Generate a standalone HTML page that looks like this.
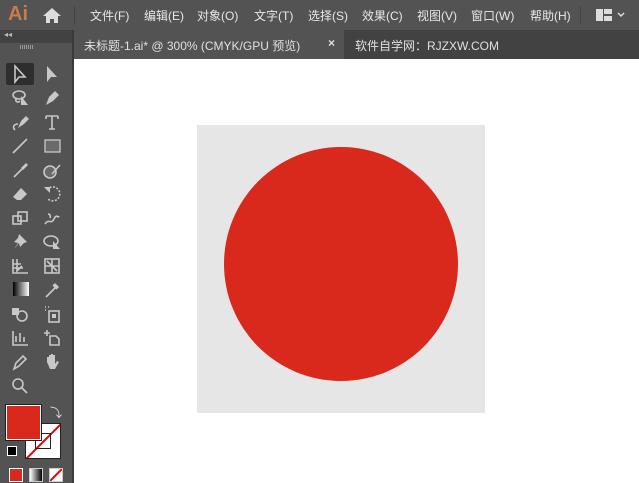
<!DOCTYPE html><html><head><style>
body{margin:0;width:639px;height:483px;overflow:hidden;background:#fff;font-family:"Liberation Sans","Noto Sans CJK SC",sans-serif;position:relative}
.menu{position:absolute;left:0;top:0;width:639px;height:30px;background:#535353;color:#e8e8e8;font-size:12px}
.menu span{position:absolute;top:7px}
.tabbar{position:absolute;left:74px;top:30px;width:565px;height:29px;background:#424242}
.tab{position:absolute;left:0;top:0;width:270px;height:29px;background:#535353;color:#e0e0e0;font-size:12px}
.left{position:absolute;left:0;top:30px;width:72px;height:453px;background:#535353}
.edge{position:absolute;left:72px;top:30px;width:2px;height:453px;background:#3a3a3a}
svg.i{position:absolute;width:20px;height:20px}
svg.i *{stroke:#c8c8c8;fill:none;stroke-width:1.6}
svg.i .f{fill:#c8c8c8;stroke:none}
</style></head><body>
<div class="menu">
<span style="left:8px;top:3px;font-size:20px;color:#c87c4a;font-weight:bold">Ai</span>
<svg style="position:absolute;left:42px;top:7px" width="20" height="16"><path d="M10 1L1 9h3v7h4v-4h4v4h4V9h3z" fill="#ddd"/></svg>
<div style="position:absolute;left:74px;top:6px;width:1px;height:18px;background:#444"></div>
<span style="left:90px">文件(F)</span><span style="left:144px">编辑(E)</span><span style="left:197px">对象(O)</span><span style="left:254px">文字(T)</span><span style="left:308px">选择(S)</span><span style="left:362px">效果(C)</span><span style="left:417px">视图(V)</span><span style="left:471px">窗口(W)</span><span style="left:530px">帮助(H)</span>
<div style="position:absolute;left:580px;top:6px;width:1px;height:18px;background:#444"></div>
<svg style="position:absolute;left:596px;top:9px" width="30" height="12"><rect x="0" y="0" width="7" height="12" fill="#ddd"/><rect x="8" y="0" width="8" height="5" fill="#ddd"/><rect x="8" y="7" width="8" height="5" fill="#ddd"/><path d="M22 4l3 3 3-3" stroke="#ddd" fill="none" stroke-width="1.5"/></svg>
</div>
<div class="left">
<div style="height:13px;background:#424242;color:#bbb;font-size:8px;padding-left:4px">◂◂</div>
<div style="position:absolute;left:20px;top:15px;width:14px;height:4px;background:repeating-linear-gradient(90deg,#999 0 1px,transparent 1px 2px)"></div>
<div style="position:absolute;left:6px;top:33px;width:28px;height:22px;background:#2e2e2e;border-radius:2px"></div>
</div>
<div class="edge"></div>
<svg class="i" style="left:10px;top:64px"><path d="M5 2v16l4-5 6 0z"/></svg>
<svg class="i" style="left:42px;top:64px"><path class="f" d="M5 2v16l4-5 6 0z"/></svg>
<svg class="i" style="left:10px;top:88px"><ellipse cx="9" cy="7" rx="6" ry="4"/><path d="M7 10c-3 2 0 6 3 3"/><path class="f" d="M11 8l7 9h-7z"/></svg>
<svg class="i" style="left:42px;top:88px"><path class="f" d="M4 17l3-8 6-6 4 4-6 6z"/></svg>
<svg class="i" style="left:10px;top:112px"><path class="f" d="M8 16l3-7 5-5 3 3-5 5z"/><path d="M8 12c-4 0-6 3-3 6"/></svg>
<svg class="i" style="left:42px;top:112px"><path d="M4 4h12M10 4v13M7 17h6M4 4v3M16 4v3"/></svg>
<svg class="i" style="left:10px;top:136px"><path d="M3 17L17 3"/></svg>
<svg class="i" style="left:42px;top:136px"><rect class="f" x="3" y="4" width="15" height="12" style="fill:#6a6a6a;stroke:#c8c8c8;stroke-width:1.3"/></svg>
<svg class="i" style="left:10px;top:160px"><path d="M4 17l8-8"/><path class="f" d="M11 8l5-5 2 2-5 5z"/></svg>
<svg class="i" style="left:42px;top:160px"><circle cx="8" cy="12" r="6" style="fill:#6a6a6a"/><path d="M10 14l8-9" stroke-width="3"/></svg>
<svg class="i" style="left:10px;top:184px"><path class="f" d="M3 13l8-9 6 6-6 6H7z"/></svg>
<svg class="i" style="left:42px;top:184px"><path d="M5 6a7 7 0 1 1 1 9" stroke-dasharray="2 1.5"/><path class="f" d="M2 3h6v6z"/></svg>
<svg class="i" style="left:10px;top:208px"><rect x="3" y="8" width="8" height="8"/><rect x="8" y="4" width="9" height="9"/></svg>
<svg class="i" style="left:42px;top:208px"><path d="M3 16c4-6 6 1 9-5s4 0 5-3M6 6c2 0 3 2 2 4"/></svg>
<svg class="i" style="left:10px;top:232px"><path class="f" d="M9 2l8 8-3 1-4 4-1-4-5 6 4-6-4-1 4-4z"/></svg>
<svg class="i" style="left:42px;top:232px"><ellipse cx="9" cy="9" rx="7" ry="5"/><path class="f" d="M11 9l7 8h-7z"/></svg>
<svg class="i" style="left:10px;top:256px"><path d="M3 3v14h15M3 8h8M3 12h10M7 3v12l5-5"/></svg>
<svg class="i" style="left:42px;top:256px"><rect x="3" y="3" width="14" height="14"/><path d="M3 10h14M10 3v14M5 5l10 10"/></svg>
<div style="position:absolute;left:13px;top:282px;width:16px;height:14px;background:linear-gradient(90deg,#000,#fff)"></div>
<svg class="i" style="left:42px;top:280px"><path d="M4 17l9-9M11 5l4 4"/><path class="f" d="M13 3l4 4-2 2-4-4z"/></svg>
<svg class="i" style="left:10px;top:304px"><rect class="f" x="2" y="4" width="7" height="7"/><circle cx="12" cy="12" r="5"/></svg>
<svg class="i" style="left:42px;top:304px"><rect x="7" y="7" width="10" height="11"/><rect class="f" x="10" y="10" width="4" height="4"/><path d="M3 3h1M6 3h1M3 6h1"/></svg>
<svg class="i" style="left:10px;top:328px"><path d="M3 3v14h15M6 14V8M10 14V5M14 14V9"/></svg>
<svg class="i" style="left:42px;top:328px"><path d="M2 5h6M5 2v6M8 8h6l3 3v6H8z"/></svg>
<svg class="i" style="left:10px;top:352px"><path d="M4 17l2-6 7-7 3 3-7 7z"/></svg>
<svg class="i" style="left:42px;top:352px"><path class="f" d="M5 10V5h2v5-7h2v7-8h2v8-7h2v9l2-3 2 1-4 7H8z"/></svg>
<svg class="i" style="left:10px;top:376px"><circle cx="8" cy="8" r="5"/><path d="M12 12l5 5" stroke-width="2"/></svg>
<div style="position:absolute;left:25px;top:423px;width:34px;height:34px;background:#fff;border:1px solid #222;overflow:hidden"><div style="position:absolute;left:-8px;top:16px;width:52px;height:2px;background:#e00;transform:rotate(-45deg)"></div><div style="position:absolute;left:9px;top:9px;width:14px;height:14px;border:1px solid #222"></div></div>
<div style="position:absolute;left:6px;top:405px;width:33px;height:33px;background:#d9291c;border:1px solid #fff;outline:1px solid #222"></div>
<div style="position:absolute;left:50px;top:404px;color:#ddd;font-size:12px">⤵</div>
<div style="position:absolute;left:7px;top:446px;width:8px;height:8px;border:1px solid #fff;background:#000"></div>
<div style="position:absolute;left:9px;top:468px;width:12px;height:12px;background:#d9291c;border:1px solid #fff"></div>
<div style="position:absolute;left:29px;top:468px;width:12px;height:12px;background:linear-gradient(90deg,#fff,#000);border:1px solid #ccc"></div>
<div style="position:absolute;left:49px;top:468px;width:12px;height:12px;background:#fff;border:1px solid #ccc;overflow:hidden"><div style="position:absolute;left:-3px;top:5px;width:18px;height:2px;background:#e00;transform:rotate(-45deg)"></div></div>
<div class="tabbar"><div class="tab"><span style="position:absolute;left:10px;top:7px">未标题-1.ai* @ 300% (CMYK/GPU 预览)</span><span style="position:absolute;left:254px;top:6px;font-weight:bold">×</span></div>
<span style="position:absolute;left:281px;top:7px;color:#e0e0e0;font-size:12px">软件自学网：RJZXW.COM</span></div>
<div style="position:absolute;left:197px;top:125px;width:288px;height:288px;background:#e6e6e6"></div>
<div style="position:absolute;left:224px;top:147px;width:234px;height:234px;border-radius:50%;background:#d9291c"></div>
</body></html>
